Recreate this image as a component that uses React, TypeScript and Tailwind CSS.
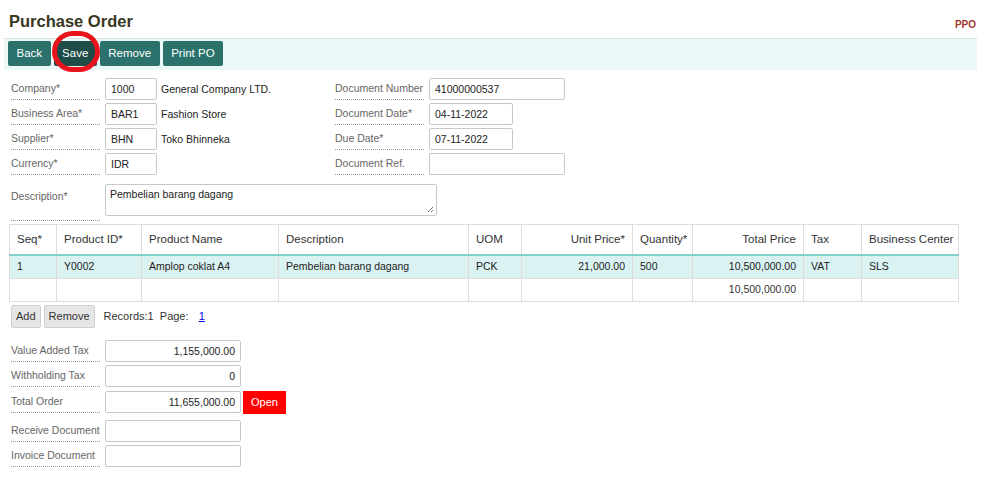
import React from "react";

const font = { fontFamily: '"Liberation Sans", Arial, sans-serif' };

function Label({ children, tall }: { children: React.ReactNode; tall?: boolean }) {
  return (
    <div
      className={`w-[89px] shrink-0 whitespace-nowrap border-b border-dotted border-[#9a9a9a] text-[10.5px] text-[#666] ${
        tall ? "h-[37px] pt-[5px]" : "h-[22px] leading-[21px]"
      }`}
    >
      {children}
    </div>
  );
}

function Input({ value, w, right }: { value?: string; w: string; right?: boolean }) {
  return (
    <div
      className={`${w} h-[22px] shrink-0 rounded-[2px] border border-[#c8c8c8] bg-white px-[5px] text-[10.5px] leading-[20px] text-[#222] ${
        right ? "text-right" : ""
      }`}
    >
      {value}
    </div>
  );
}

function Btn({ children, dark }: { children: React.ReactNode; dark?: boolean }) {
  return (
    <div
      className={`h-[25px] rounded-[2px] px-[8.5px] text-[11.5px] leading-[25px] text-white ${
        dark ? "bg-[#1e4d48]" : "bg-[#2a726b]"
      }`}
    >
      {children}
    </div>
  );
}

const cols = [
  { h: "Seq*", w: 47 },
  { h: "Product ID*", w: 85 },
  { h: "Product Name", w: 137 },
  { h: "Description", w: 190 },
  { h: "UOM", w: 53 },
  { h: "Unit Price*", w: 111, r: true },
  { h: "Quantity*", w: 60 },
  { h: "Total Price", w: 111, r: true },
  { h: "Tax", w: 58 },
  { h: "Business Center", w: 97 },
];

const row1 = ["1", "Y0002", "Amplop coklat A4", "Pembelian barang dagang", "PCK", "21,000.00", "500", "10,500,000.00", "VAT", "SLS"];
const row2 = ["", "", "", "", "", "", "", "10,500,000.00", "", ""];

export default function App() {
  return (
    <div className="relative h-[481px] w-[981px] overflow-hidden bg-white" style={font}>
      {/* header */}
      <div className="flex h-[38px] justify-between pl-[9px] pr-[5px]">
        <div className="pt-[11px] text-[16.5px] font-bold leading-[20px] text-[#3a3823]">Purchase Order</div>
        <div className="pt-[17px] text-[10px] font-bold text-[#a23a2e]">PPO</div>
      </div>

      {/* toolbar */}
      <div className="mx-[4px] flex h-[32px] gap-[3px] border-t border-[#dfe6e6] bg-[#ebf8f8] pl-[4px] pt-[2px]">
        <Btn>Back</Btn>
        <Btn dark>Save</Btn>
        <Btn>Remove</Btn>
        <Btn>Print PO</Btn>
      </div>

      {/* form */}
      <div className="mt-[8px] flex pl-[11px]">
        <div className="flex w-[324px] flex-col gap-[3px]">
          {[
            ["Company*", "1000", "General Company LTD."],
            ["Business Area*", "BAR1", "Fashion Store"],
            ["Supplier*", "BHN", "Toko Bhinneka"],
            ["Currency*", "IDR", ""],
          ].map(([l, v, t]) => (
            <div key={l} className="flex items-start">
              <Label>{l}</Label>
              <div className="ml-[5px]">
                <Input value={v} w="w-[52px]" />
              </div>
              <div className="ml-[4px] text-[10.5px] leading-[22px] text-[#222]">{t}</div>
            </div>
          ))}
        </div>
        <div className="flex flex-col gap-[3px]">
          {[
            ["Document Number", "41000000537", "w-[136px]"],
            ["Document Date*", "04-11-2022", "w-[84px]"],
            ["Due Date*", "07-11-2022", "w-[84px]"],
            ["Document Ref.", "", "w-[136px]"],
          ].map(([l, v, w]) => (
            <div key={l} className="flex items-start">
              <Label>{l}</Label>
              <div className="ml-[5px]">
                <Input value={v} w={w} />
              </div>
            </div>
          ))}
        </div>
      </div>

      {/* description */}
      <div className="mt-[9px] flex items-start pl-[11px]">
        <Label tall>Description*</Label>
        <div className="relative ml-[5px] h-[32px] w-[332px] rounded-[2px] border border-[#c8c8c8] px-[4px] pt-[2px] text-[10.5px] text-[#222]">
          Pembelian barang dagang
          <svg className="absolute bottom-[2px] right-[2px]" width="7" height="7" viewBox="0 0 7 7">
            <path d="M6 1 L1 6 M6 4 L4 6" stroke="#777" strokeWidth="1" />
          </svg>
        </div>
      </div>

      {/* table */}
      <div className="ml-[9px] mt-[3px] w-[949px]">
        <table className="w-[949px] table-fixed border-collapse text-[#333]">
          <colgroup>
            {cols.map((c) => (
              <col key={c.h} style={{ width: c.w }} />
            ))}
          </colgroup>
          <thead>
            <tr className="h-[30px] border-b-2 border-[#86d0cc]">
              {cols.map((c) => (
                <th
                  key={c.h}
                  className={`whitespace-nowrap border border-[#ddd] border-b-[#86d0cc] px-[7px] text-[11.5px] font-normal ${
                    c.r ? "text-right" : "text-left"
                  }`}
                >
                  {c.h}
                </th>
              ))}
            </tr>
          </thead>
          <tbody>
            <tr className="h-[24px] bg-[#dbf2f2]">
              {row1.map((v, i) => (
                <td
                  key={i}
                  className={`whitespace-nowrap border border-[#ddd] px-[7px] text-[10.5px] text-[#222] ${cols[i].r ? "text-right" : ""}`}
                >
                  {v}
                </td>
              ))}
            </tr>
            <tr className="h-[23px]">
              {row2.map((v, i) => (
                <td
                  key={i}
                  className={`whitespace-nowrap border border-[#ddd] px-[7px] text-[10.5px] text-[#333] ${cols[i].r ? "text-right" : ""}`}
                >
                  {v}
                </td>
              ))}
            </tr>
          </tbody>
        </table>
      </div>

      {/* add/remove */}
      <div className="mt-[3px] flex items-center gap-[3px] pl-[11px]">
        <div className="h-[23px] rounded-[2px] border border-[#cfcfcf] bg-[#e6e6e6] px-[4px] text-[11px] leading-[21px] text-[#333]">
          Add
        </div>
        <div className="h-[23px] rounded-[2px] border border-[#cfcfcf] bg-[#e6e6e6] px-[4px] text-[11px] leading-[21px] text-[#333]">
          Remove
        </div>
        <div className="ml-[6px] text-[11px] text-[#333]">
          Records:1&nbsp; Page:&nbsp; <span className="ml-[4px] text-[#0000ee] underline">1</span>
        </div>
      </div>

      {/* totals */}
      <div className="mt-[12px] flex flex-col pl-[11px]">
        <div className="flex items-start">
          <Label>Value Added Tax</Label>
          <div className="ml-[5px]">
            <Input value="1,155,000.00" w="w-[136px]" right />
          </div>
        </div>
        <div className="mt-[3px] flex items-start">
          <Label>Withholding Tax</Label>
          <div className="ml-[5px]">
            <Input value="0" w="w-[136px]" right />
          </div>
        </div>
        <div className="mt-[4px] flex items-start">
          <Label>Total Order</Label>
          <div className="ml-[5px]">
            <Input value="11,655,000.00" w="w-[136px]" right />
          </div>
          <div className="ml-[2px] h-[23px] bg-[#ff0000] px-[8px] text-[11px] leading-[23px] text-white">Open</div>
        </div>
        <div className="mt-[6px] flex items-start">
          <Label>Receive Document</Label>
          <div className="ml-[5px]">
            <Input value="" w="w-[136px]" />
          </div>
        </div>
        <div className="mt-[3px] flex items-start">
          <Label>Invoice Document</Label>
          <div className="ml-[5px]">
            <Input value="" w="w-[136px]" />
          </div>
        </div>
      </div>

      {/* red annotation circle */}
      <div className="absolute left-[52px] top-[31px] h-[41px] w-[48px] rounded-full border-[5px] border-[#e8141b]" />
    </div>
  );
}
